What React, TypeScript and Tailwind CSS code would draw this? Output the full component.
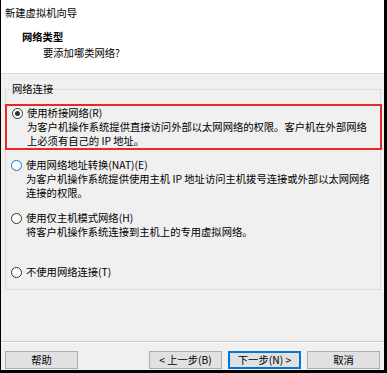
import React from 'react'

const font = { fontFamily: '"Noto Sans CJK SC", "Noto Sans", sans-serif' }

function Radio({ checked, focus }: { checked?: boolean; focus?: boolean }) {
  return (
    <span
      className={`flex h-[11px] w-[11px] shrink-0 items-center justify-center rounded-full border bg-white ${
        focus ? 'border-[#0078d7]' : 'border-[#333333]'
      }`}
    >
      {checked && <span className="h-[5px] w-[5px] rounded-full bg-[#333333]" />}
    </span>
  )
}

function Opcion({
  label,
  lineas,
  checked,
  focus,
}: {
  label: string
  lineas: string[]
  checked?: boolean
  focus?: boolean
}) {
  return (
    <div>
      <div className="flex h-[14px] items-center">
        <span className="ml-[5px] mr-[4px]">
          <Radio checked={checked} focus={focus} />
        </span>
        <span className="whitespace-nowrap">{label}</span>
      </div>
      {lineas.map((l) => (
        <div key={l} className="h-[14px] whitespace-nowrap pl-[20px]">
          {l}
        </div>
      ))}
    </div>
  )
}

function Boton({ children, defecto }: { children: React.ReactNode; defecto?: boolean }) {
  return (
    <div
      className={`flex h-[18px] w-[73px] items-center justify-center bg-[#e1e1e1] ${
        defecto ? 'border-2 border-[#0078d7]' : 'border border-[#adadad]'
      }`}
    >
      {children}
    </div>
  )
}

export default function App() {
  return (
    <div
      className="flex h-[373px] w-[387px] flex-col border-b-[3px] border-l border-r-[3px] border-black text-[10.3px] leading-[14px] text-black"
      style={font}
    >
      <div className="h-[74px] shrink-0 border-b border-[#dadada] bg-white">
        <div className="pl-[4px] pt-[6px]">新建虚拟机向导</div>
        <div className="mt-[10px] pl-[21px] font-bold">网络类型</div>
        <div className="mt-[2px] pl-[42px]">要添加哪类网络?</div>
      </div>

      <div className="flex flex-1 flex-col bg-[#f0f0f0]">
        <fieldset className="ml-[4px] mt-[8px] w-[376px] border border-[#dcdcdc] pb-[10px]">
          <legend className="ml-[5px] px-[1px]">网络连接</legend>

          <div className="-ml-[1px] -mr-[2px] mt-[8px] border-2 border-[#e8282b]">
            <Opcion
              checked
              label="使用桥接网络(R)"
              lineas={[
                '为客户机操作系统提供直接访问外部以太网网络的权限。客户机在外部网络',
                '上必须有自己的 IP 地址。',
              ]}
            />
          </div>

          <div className="mt-[8px]">
            <Opcion
              focus
              label="使用网络地址转换(NAT)(E)"
              lineas={[
                '为客户机操作系统提供使用主机 IP 地址访问主机拨号连接或外部以太网网络',
                '连接的权限。',
              ]}
            />
          </div>

          <div className="mt-[11px]">
            <Opcion label="使用仅主机模式网络(H)" lineas={['将客户机操作系统连接到主机上的专用虚拟网络。']} />
          </div>

          <div className="mt-[26px]">
            <Opcion label="不使用网络连接(T)" lineas={[]} />
          </div>
        </fieldset>

        <div className="flex-1" />

        <div className="h-[2px] border-b border-t border-b-white border-t-[#c8c8c8]" />

        <div className="flex items-center px-[4px] pb-[1px] pt-[8px]">
          <Boton>帮助</Boton>
          <div className="ml-auto flex gap-[6px]">
            <Boton>&lt; 上一步(B)</Boton>
            <Boton defecto>下一步(N) &gt;</Boton>
            <Boton>取消</Boton>
          </div>
        </div>
      </div>
    </div>
  )
}
